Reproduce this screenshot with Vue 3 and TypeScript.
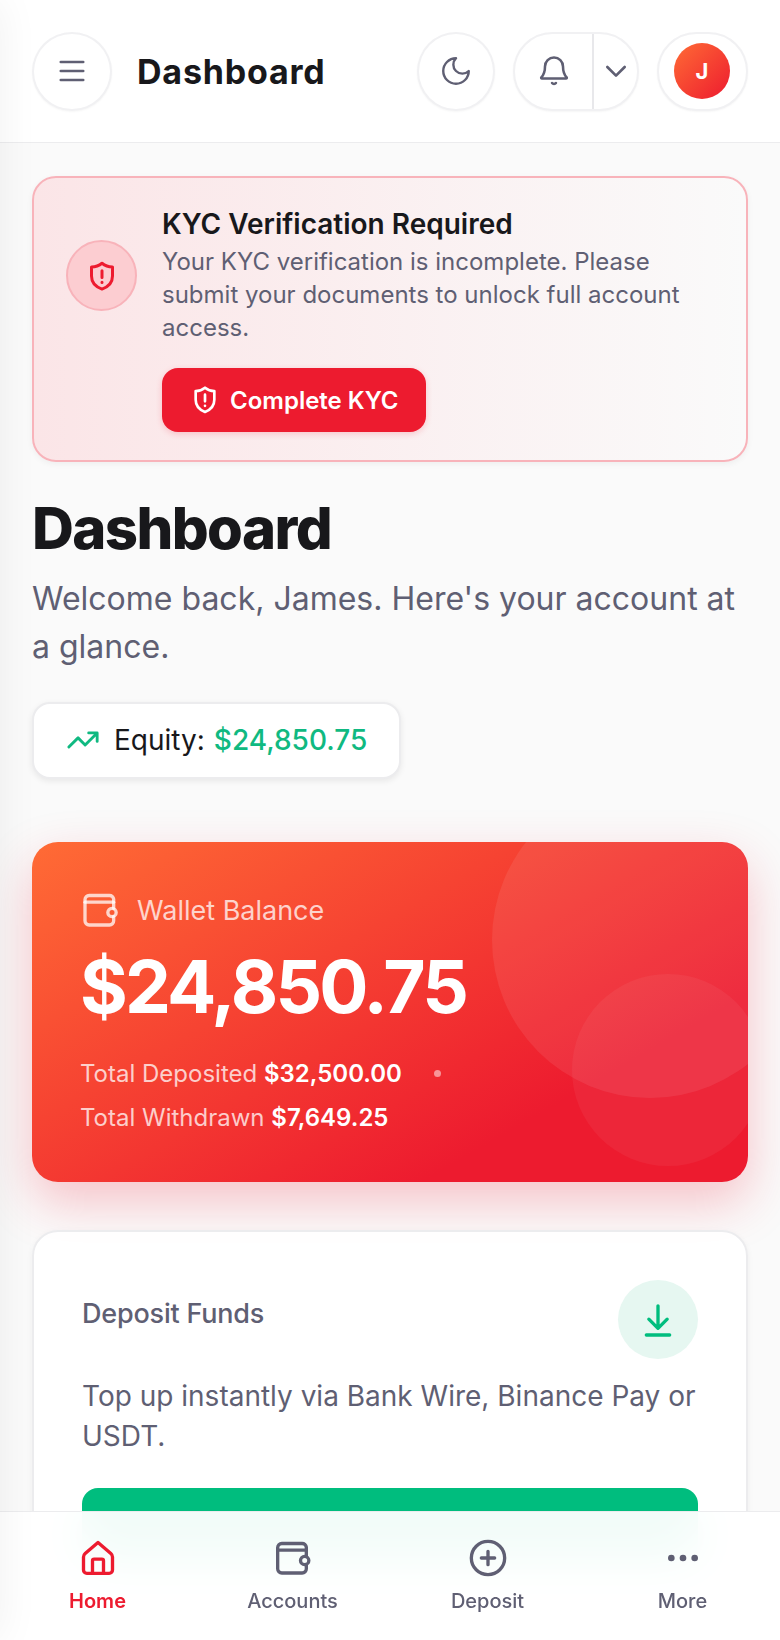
<script setup lang="ts">
interface NavItem {
  label: string
  active?: boolean
}

const navItems: NavItem[] = [
  { label: 'Home', active: true },
  { label: 'Accounts' },
  { label: 'Deposit' },
  { label: 'More' },
]
</script>

<template>
  <div class="page">
    <aside class="sidebar"></aside>

    <header class="topbar">
      <button class="round-btn menu-btn" type="button">
        <svg class="icon-36 thin" viewBox="0 0 24 24"><path d="M4.500 6h15M4.500 12h15M4.500 18h15" /></svg>
      </button>
      <h2 class="topbar-title">Dashboard</h2>
      <div class="topbar-actions">
        <button class="round-btn" type="button">
          <svg class="icon-34 thin" viewBox="0 0 24 24"><path d="M12 3a6 6 0 0 0 9 9 9 9 0 1 1-9-9Z" /></svg>
        </button>
        <div class="split-btn">
          <button class="split-main" type="button">
            <svg class="icon-36 thin" viewBox="0 0 24 24">
              <path d="M6 9a6 6 0 0 1 12 0c0 3.600.9 5.600 2.400 7.200.3.400.1.800-.4.800H4c-.5 0-.7-.4-.4-.8C5.100 14.600 6 12.600 6 9Z" />
              <path d="M10.700 20c.6.800 2 .8 2.600 0" />
            </svg>
          </button>
          <button class="split-caret" type="button">
            <svg class="icon-32" viewBox="0 0 24 24"><path d="m5.500 9 6.500 6.500L18.500 9" /></svg>
          </button>
        </div>
        <button class="avatar-btn" type="button"><span class="avatar">J</span></button>
      </div>
    </header>

    <main class="content">
      <section class="kyc-card">
        <div class="kyc-icon">
          <svg class="icon-36" viewBox="0 0 24 24">
            <path d="M12 3.500c2 1.700 4.500 2.500 7 2.500v6c0 4.500-3 7.300-7 8.700-4-1.400-7-4.200-7-8.700V6c2.500 0 5-.8 7-2.500Z" />
            <path d="M12 8.500v4.500M12 16.200v.1" />
          </svg>
        </div>
        <div class="kyc-body">
          <h3 class="kyc-title">KYC Verification Required</h3>
          <p class="kyc-text">Your KYC verification is incomplete. Please submit your documents to unlock full account access.</p>
          <button class="kyc-btn" type="button">
            <svg class="icon-32" viewBox="0 0 24 24">
              <path d="M12 2.800c2 1.700 4.500 2.500 7 2.500v6.500c0 4.700-3 7.600-7 9.200-4-1.600-7-4.500-7-9.200V5.300c2.500 0 5-.8 7-2.500Z" />
              <path d="M12 8v5M12 16.300v.1" />
            </svg>
            Complete KYC
          </button>
        </div>
      </section>

      <h1 class="page-title">Dashboard</h1>
      <p class="page-sub">Welcome back, James. Here's your account at a glance.</p>

      <div class="equity-pill">
        <svg class="icon-34" viewBox="0 0 24 24"><path d="M22 7l-8.500 8.500-5-5L2 17M16 7h6v6" /></svg>
        <span>Equity:</span>
        <span class="equity-value">$24,850.75</span>
      </div>

      <section class="wallet-card">
        <span class="bubble bubble-big"></span>
        <span class="bubble bubble-small"></span>
        <div class="wallet-label">
          <svg class="icon-40" viewBox="-0.200 0 24 24">
            <path d="M20 11V5.500A2.500 2.500 0 0 0 17.500 3.300H5.300A2.500 2.500 0 0 0 2.800 5.800v12.700A2.500 2.500 0 0 0 5.300 21h12.200a2.500 2.500 0 0 0 2.500-2.500V16" />
            <path d="M2.800 7.300H20" />
            <rect x="16.500" y="11" width="5" height="5" rx="2.500" />
          </svg>
          Wallet Balance
        </div>
        <div class="wallet-amount">$24,850.75</div>
        <div class="wallet-stats">
          <span class="stat">Total Deposited <strong>$32,500.00</strong></span>
          <span class="stat-dot"></span>
          <span class="stat">Total Withdrawn <strong>$7,649.25</strong></span>
        </div>
      </section>

      <section class="action-card">
        <div class="action-head">
          <h3 class="action-title">Deposit Funds</h3>
          <div class="action-icon">
            <svg class="icon-40" viewBox="0 0 24 24"><path d="M12 3.500v13.500M6.500 11.500 12 17l5.500-5.500M5 21h14" /></svg>
          </div>
        </div>
        <p class="action-text">Top up instantly via Bank Wire, Binance Pay or USDT.</p>
        <div class="action-btn"></div>
      </section>
    </main>

    <nav class="bottom-nav">
      <a v-for="item in navItems" :key="item.label" class="nav-item" :class="{ active: item.active }">
        <svg v-if="item.label === 'Home'" class="icon-40" viewBox="0 0 24 24">
          <path d="M12 2.700l7.700 6.600c.7.600 1 1.300 1 2.100v7.800a2 2 0 0 1-2 2H5.300a2 2 0 0 1-2-2v-7.800c0-.8.300-1.500 1-2.100L12 2.700Z" />
          <path d="M8.700 21v-7.300a1 1 0 0 1 1-1h4.600a1 1 0 0 1 1 1V21" />
        </svg>
        <svg v-else-if="item.label === 'Accounts'" class="icon-40" viewBox="0 0 24 24">
          <path d="M20 11V5.500A2.500 2.500 0 0 0 17.500 3.300H5.300A2.500 2.500 0 0 0 2.800 5.800v12.700A2.500 2.500 0 0 0 5.300 21h12.200a2.500 2.500 0 0 0 2.500-2.500V16" />
          <path d="M2.800 7.300H20" />
          <rect x="16.500" y="11" width="5" height="5" rx="2.500" />
        </svg>
        <svg v-else-if="item.label === 'Deposit'" class="icon-40" viewBox="0 0 24 24">
          <circle cx="12" cy="12" r="10" />
          <path d="M12 8v8M8 12h8" />
        </svg>
        <svg v-else class="icon-40 dots" viewBox="0 0 24 24">
          <circle cx="5" cy="12" r="1" />
          <circle cx="12" cy="12" r="1" />
          <circle cx="19" cy="12" r="1" />
        </svg>
        <span class="nav-label">{{ item.label }}</span>
      </a>
    </nav>
  </div>
</template>

<style>
html,
body {
  margin: 0;
  background: #fafafa;
}
</style>

<style scoped>
.page {
  position: relative;
  height: 1640px;
  overflow: hidden;
  background: #fafafa;
  color: #18181b;
  font-family: Inter, "Liberation Sans", sans-serif;
}

svg {
  display: block;
  flex-shrink: 0;
  fill: none;
  stroke: currentColor;
  stroke-width: 2;
  stroke-linecap: round;
  stroke-linejoin: round;
}
svg.thin { stroke-width: 1.7; }
.icon-32 { width: 32px; height: 32px; }
.icon-34 { width: 34px; height: 34px; }
.icon-36 { width: 36px; height: 36px; }
.icon-40 { width: 40px; height: 40px; }

button {
  font-family: inherit;
  padding: 0;
  cursor: pointer;
}

/* off-canvas drawer, only its shadow shows on the left edge */
.sidebar {
  position: absolute;
  top: 0;
  bottom: 0;
  left: -300px;
  width: 300px;
  box-shadow: 0 0 40px rgba(0, 0, 0, 0.06);
  z-index: 30;
}

.topbar {
  display: flex;
  align-items: center;
  height: 142px;
  padding: 0 32px;
  background: #fff;
  border-bottom: 1px solid #ececee;
}
.round-btn {
  display: flex;
  align-items: center;
  justify-content: center;
  width: 78px;
  height: 79px;
  border: 2px solid #f1f1f3;
  border-radius: 50%;
  background: #fff;
  color: #5f5f73;
  box-shadow: 0 1px 2px rgba(0, 0, 0, 0.04);
}
.menu-btn {
  width: 80px;
}
.topbar-title {
  margin: 0 0 0 25px;
  font-size: 34px;
  font-weight: 700;
  letter-spacing: 0.8px;
}
.topbar-actions {
  display: flex;
  align-items: center;
  gap: 18px;
  margin-left: auto;
}
.split-btn {
  display: flex;
  height: 79px;
  width: 126px;
  box-sizing: border-box;
  border: 2px solid #f1f1f3;
  border-radius: 40px;
  background: #fff;
  overflow: hidden;
  box-shadow: 0 1px 2px rgba(0, 0, 0, 0.04);
}
.split-main,
.split-caret {
  display: flex;
  align-items: center;
  justify-content: center;
  border: 0;
  background: none;
  color: #5f5f73;
}
.split-main {
  width: 79px;
  border-right: 2px solid #e8e8eb;
}
.split-caret {
  flex: 1;
}
.avatar-btn {
  display: flex;
  align-items: center;
  justify-content: center;
  width: 91px;
  height: 79px;
  border: 2px solid #f1f1f3;
  border-radius: 40px;
  background: #fff;
  box-shadow: 0 1px 2px rgba(0, 0, 0, 0.04);
}
.avatar {
  display: flex;
  align-items: center;
  justify-content: center;
  width: 56px;
  height: 56px;
  margin-right: 1px;
  border-radius: 50%;
  background: linear-gradient(135deg, #ff6b35, #ed1b2f);
  color: #fff;
  font-size: 22px;
  font-weight: 700;
}

.content {
  padding: 33px 32px 0;
}

.kyc-card {
  display: flex;
  align-items: flex-start;
  gap: 25px;
  box-sizing: border-box;
  height: 286px;
  padding: 32px 32px 0;
  border: 2px solid #f8b3ba;
  border-radius: 24px;
  background: linear-gradient(90deg, #fbe5e7, #fafafa);
  box-shadow: 0 2px 6px rgba(0, 0, 0, 0.05);
}
.kyc-icon {
  display: flex;
  align-items: center;
  justify-content: center;
  flex-shrink: 0;
  box-sizing: border-box;
  width: 71px;
  height: 71px;
  margin-top: 30px;
  border: 2px solid #f8b3ba;
  border-radius: 50%;
  background: #fccdd1;
  color: #ed1b2f;
}
.kyc-title {
  margin: -6px 0 0;
  font-size: 28px;
  line-height: 41px;
  font-weight: 600;
}
.kyc-text {
  margin: 0;
  font-size: 24px;
  line-height: 33px;
  color: #5f5f73;
}
.kyc-btn {
  display: flex;
  align-items: center;
  gap: 9px;
  height: 64px;
  margin-top: 24px;
  padding: 0 27px;
  border: 0;
  border-radius: 16px;
  background: #ed1b2f;
  color: #fff;
  font-size: 24px;
  font-weight: 600;
  box-shadow: 0 2px 6px rgba(239, 28, 53, 0.2);
}

.page-title {
  margin: 30px 0 0;
  font-size: 58px;
  line-height: 72px;
  font-weight: 800;
  letter-spacing: -1.600px;
}
.page-sub {
  margin: 11px 0 0;
  font-size: 32px;
  line-height: 48px;
  color: #5f5f73;
}
.equity-pill {
  display: inline-flex;
  align-items: center;
  gap: 9px;
  height: 77px;
  box-sizing: border-box;
  margin-top: 31px;
  padding: 0 32px 2px;
  border: 2px solid #ececee;
  border-radius: 18px;
  background: #fff;
  font-size: 28px;
  box-shadow: 0 2px 6px rgba(0, 0, 0, 0.08);
}
.equity-pill svg {
  color: #10b981;
  margin-right: 5px;
}
.equity-value {
  color: #10b981;
  font-weight: 500;
}

.wallet-card {
  position: relative;
  overflow: hidden;
  box-sizing: border-box;
  height: 340px;
  margin-top: 63px;
  padding: 48px 48px 0;
  border-radius: 26px;
  background: linear-gradient(150deg, #ff6b35 0%, #ed1b2f 75%);
  color: #fff;
  box-shadow: 0 20px 50px rgba(239, 28, 53, 0.25);
}
.bubble {
  position: absolute;
  border-radius: 50%;
  background: rgba(255, 255, 255, 0.08);
}
.bubble-big {
  top: -60px;
  right: -60px;
  width: 316px;
  height: 316px;
}
.bubble-small {
  right: -16px;
  bottom: 16px;
  width: 192px;
  height: 192px;
  background: rgba(255, 255, 255, 0.05);
}
.wallet-label {
  position: relative;
  display: flex;
  align-items: center;
  gap: 17px;
  font-size: 27px;
  color: rgba(255, 255, 255, 0.75);
}
.wallet-amount {
  position: relative;
  margin-top: 11px;
  font-size: 73px;
  line-height: 92px;
  font-weight: 700;
  letter-spacing: -2.800px;
}
.wallet-stats {
  position: relative;
  display: flex;
  flex-wrap: wrap;
  align-items: center;
  gap: 15px 32px;
  margin-top: 26px;
  font-size: 24px;
  color: rgba(255, 255, 255, 0.75);
}
.stat strong {
  color: #fff;
  font-weight: 600;
}
.stat-dot {
  width: 7px;
  height: 7px;
  border-radius: 50%;
  background: rgba(255, 255, 255, 0.5);
}

.action-card {
  position: relative;
  box-sizing: border-box;
  height: 400px;
  margin-top: 48px;
  padding: 48px 48px 0;
  border: 2px solid #ececee;
  border-radius: 26px;
  background: rgba(255, 255, 255, 0.88);
  box-shadow: 0 2px 6px rgba(0, 0, 0, 0.05);
}
.action-head {
  display: flex;
  align-items: flex-start;
  justify-content: space-between;
}
.action-title {
  margin: 17px 0 0;
  font-size: 27px;
  font-weight: 500;
  letter-spacing: -0.2px;
  color: #5f5f73;
}
.action-icon {
  display: flex;
  align-items: center;
  justify-content: center;
  width: 80px;
  height: 79px;
  border-radius: 50%;
  background: #e6f7f1;
  color: #00bd7e;
}
.action-text {
  margin: 17px 0 0;
  font-size: 28px;
  line-height: 40px;
  color: #5f5f73;
}
.action-btn {
  height: 72px;
  margin-top: 32px;
  border-radius: 16px;
  background: #00bd7e;
}

.bottom-nav {
  position: absolute;
  left: 0;
  right: 0;
  bottom: 0;
  display: grid;
  grid-template-columns: repeat(4, 1fr);
  height: 129px;
  box-sizing: border-box;
  border-top: 1px solid #ececee;
  background: rgba(255, 255, 255, 0.95);
  backdrop-filter: blur(24px);
  z-index: 20;
}
.nav-item {
  display: flex;
  flex-direction: column;
  align-items: center;
  padding-top: 26px;
  color: #5f5f73;
}
.nav-item.active {
  color: #ed1b2f;
}
.nav-label {
  margin-top: 9px;
  font-size: 20px;
  line-height: 28px;
  font-weight: 500;
}
.nav-item.active .nav-label {
  font-weight: 600;
}
.dots circle {
  fill: currentColor;
}
</style>
